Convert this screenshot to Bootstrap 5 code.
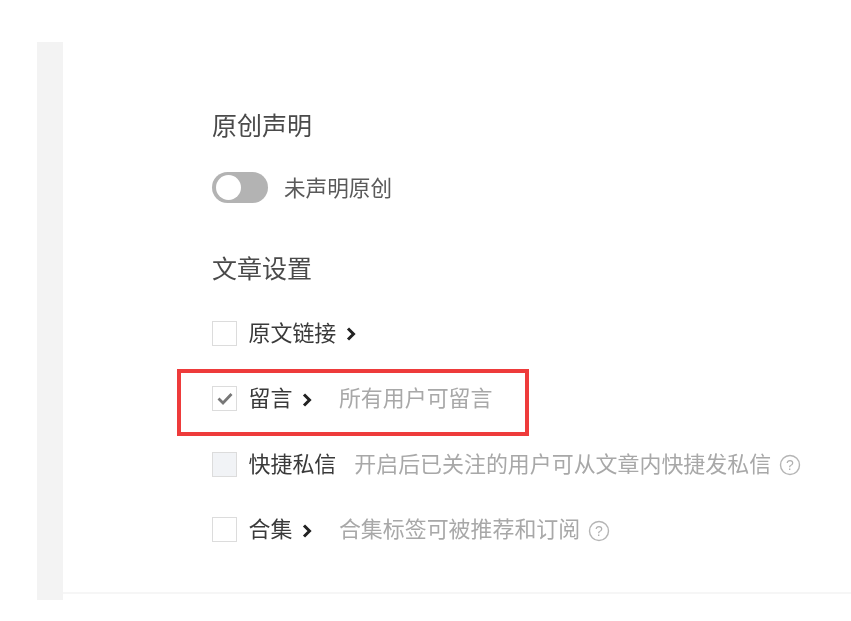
<!DOCTYPE html>
<html lang="zh-CN">
<head>
<meta charset="utf-8">
<title>文章设置</title>
<link href="https://cdn.jsdelivr.net/npm/bootstrap@5.3.0/dist/css/bootstrap.min.css" rel="stylesheet">
<style>
html,body{height:100%;background:#fff;overflow:hidden}
body{font-family:"Liberation Sans","Noto Sans CJK SC",sans-serif;color:#3f3f3f}
.page-shell{height:600px;padding-top:42px;margin-left:37px}
.side-strip{width:26px;background:#f3f3f3;flex:none}
.main-pane{border-bottom:2px solid #f6f6f6;margin-bottom:4px;padding:67px 0 0 149px;height:552px;filter:blur(.45px)}
.sect-title{font-size:25px;line-height:34px;font-weight:400;color:#4a4a4a;margin:0}
.toggle-row{height:32px;margin-top:28px;margin-bottom:49px;font-size:21.6px;color:#5a5a5a}
.toggle-label{padding-top:4px}
.toggle-track{width:56px;height:31px;border-radius:16px;background:#b3b3b3;position:relative;flex:none;margin-right:16px}
.toggle-knob{position:absolute;left:4px;top:3px;width:25px;height:25px;border-radius:50%;background:#fff}
.opt-row{height:32px;margin-top:33.5px;font-size:21.95px;position:relative;white-space:nowrap;color:#3a3a3a}
.sect-title+.opt-row{margin-top:32px}
.tick-box{width:25px;height:25px;border:1.5px solid #dcdcdc;background:#fff;flex:none;margin-right:11.5px;margin-bottom:2px}
.tick-box.off{background:#f1f3f6}
.chev{margin-left:10px;flex:none}
.opt-hint{color:#a8a8a8;margin-left:26.5px}
.opt-hint.wide{margin-left:18px}
.help-dot{margin-left:8px;flex:none}
.mark-frame{position:absolute;left:-35px;top:-15px;width:352px;height:67px;border:4px solid #ee3b3b}
</style>
</head>
<body>
<div class="page-shell d-flex">
  <div class="side-strip"></div>
  <div class="main-pane flex-grow-1">
    <h2 class="sect-title">原创声明</h2>
    <div class="toggle-row d-flex align-items-center">
      <span class="toggle-track"><span class="toggle-knob"></span></span>
      <span class="toggle-label">未声明原创</span>
    </div>
    <h2 class="sect-title">文章设置</h2>
    <div class="opt-row d-flex align-items-center">
      <span class="tick-box"></span><span>原文链接</span>
      <svg class="chev" width="10" height="14" viewBox="0 0 10 14"><path d="M2 1.5 7.5 7 2 12.5" fill="none" stroke="#222" stroke-width="3"/></svg>
    </div>
    <div class="opt-row d-flex align-items-center">
      <span class="mark-frame"></span>
      <span class="tick-box d-flex align-items-center justify-content-center">
        <svg width="16" height="13" viewBox="0 0 16 13"><path d="M1.5 6.5 6 11 14.5 2" fill="none" stroke="#777" stroke-width="2.8"/></svg>
      </span>
      <span>留言</span>
      <svg class="chev" width="10" height="14" viewBox="0 0 10 14"><path d="M2 1.5 7.5 7 2 12.5" fill="none" stroke="#222" stroke-width="3"/></svg>
      <span class="opt-hint">所有用户可留言</span>
    </div>
    <div class="opt-row d-flex align-items-center">
      <span class="tick-box off"></span><span>快捷私信</span>
      <span class="opt-hint wide">开启后已关注的用户可从文章内快捷发私信</span>
      <svg class="help-dot" width="22" height="22" viewBox="0 0 22 22"><circle cx="11" cy="11" r="9.5" fill="none" stroke="#b5b5b5" stroke-width="1.4"/><text x="11" y="16" text-anchor="middle" font-size="14" fill="#b0b0b0" font-family="Liberation Sans">?</text></svg>
    </div>
    <div class="opt-row d-flex align-items-center">
      <span class="tick-box"></span><span>合集</span>
      <svg class="chev" width="10" height="14" viewBox="0 0 10 14"><path d="M2 1.5 7.5 7 2 12.5" fill="none" stroke="#222" stroke-width="3"/></svg>
      <span class="opt-hint">合集标签可被推荐和订阅</span>
      <svg class="help-dot" width="22" height="22" viewBox="0 0 22 22"><circle cx="11" cy="11" r="9.5" fill="none" stroke="#b5b5b5" stroke-width="1.4"/><text x="11" y="16" text-anchor="middle" font-size="14" fill="#b0b0b0" font-family="Liberation Sans">?</text></svg>
    </div>
  </div>
</div>
<script src="https://cdn.jsdelivr.net/npm/bootstrap@5.3.0/dist/js/bootstrap.bundle.min.js"></script>
</body>
</html>
